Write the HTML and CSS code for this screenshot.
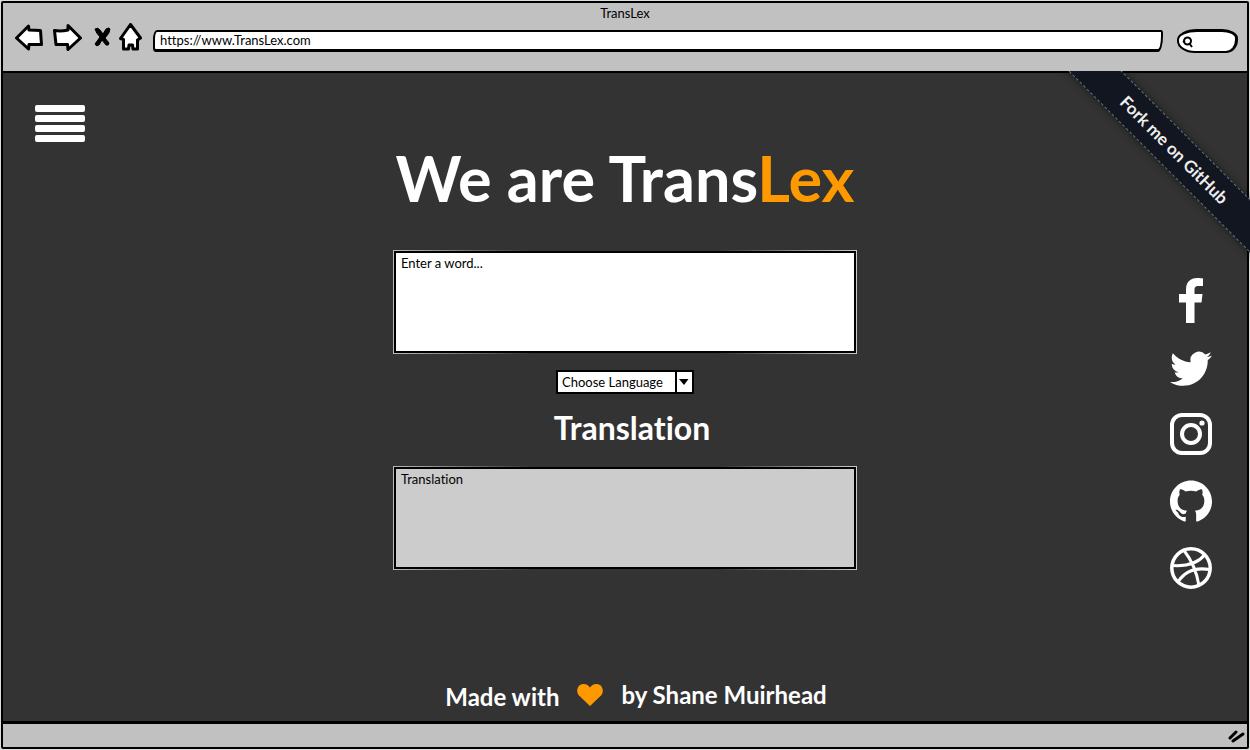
FILE: index.html
```html
<!DOCTYPE html>
<html lang="en">
<head>
<meta charset="utf-8">
<title>TransLex</title>
<link rel="stylesheet" href="styles.css">
</head>
<body>
<div class="window">
  <header class="chrome">
    <div class="chrome-title">TransLex</div>
    <div class="toolbar">
      <button class="tool" type="button" aria-label="Back">
        <svg width="28" height="27" viewBox="0 0 28 27"><path class="sketch" d="M1.500 14 L13.500 2 L14 6 L25.500 6.500 Q26 14 26.500 20.500 L14 20.500 L13.500 25 Z"/></svg>
      </button>
      <button class="tool tool-forward" type="button" aria-label="Forward">
        <svg width="29" height="27" viewBox="0 0 29 27"><path class="sketch" d="M1.500 6.500 Q8 7.500 15 6 L15 1.500 L27.500 14 L15 25.500 L14.500 20.500 L3 20.500 Z"/></svg>
      </button>
      <button class="tool tool-stop" type="button" aria-label="Stop">
        <svg width="17" height="21" viewBox="0 0 17 21"><path stroke="#000" d="M1 2 Q4 0 6 3 L9 7 L12 2 Q15 0 16 2 Q16 6 11 11 L15 16 Q15 19 12 18 L8 13 L5 18 Q2 20 1 17 L6 10 Q2 6 1 2 Z"/></svg>
      </button>
      <button class="tool" type="button" aria-label="Home">
        <svg width="23" height="28" viewBox="0 0 23 28"><path class="sketch" d="M11.500 1.500 L21.500 15 L18.500 17 L18.500 26 L14 26 L13.500 22 L10 22 L9.500 26 L4.500 26 L4.500 16.500 L1.500 15.500 Z"/></svg>
      </button>
      <input class="address" type="text" aria-label="Address" value="https://www.TransLex.com">
      <label class="search">
        <svg width="12" height="12" viewBox="0 0 12 12" fill="none" stroke="#000" stroke-width="2"><circle cx="5.500" cy="5" r="3.500"/><path d="M3 6.500 L1 5 M7 7 L10 11"/></svg>
        <input class="search-input" type="text" aria-label="Search">
      </label>
    </div>
  </header>

  <main class="page">
    <button class="menu" type="button" aria-label="Menu">
      <span class="bar"></span><span class="bar"></span><span class="bar"></span><span class="bar"></span>
    </button>

    <section class="translator">
      <h1 class="brand">We are Trans<span class="accent">Lex</span></h1>
      <div class="field"><textarea class="box" aria-label="Word" placeholder="Enter a word..."></textarea></div>
      <div class="picker">
        <select class="language" aria-label="Language"><option>Choose Language</option></select>
        <svg class="picker-arrow" width="10" height="6" viewBox="0 0 10 6"><path d="M0 0 H9.500 L5 6 Z"/></svg>
      </div>
      <h2 class="subtitle"><label for="result">Translation</label></h2>
      <div class="field"><textarea class="box box-result" id="result" placeholder="Translation" readonly></textarea></div>
    </section>

    <nav class="social" aria-label="Social">
      <a class="social-link" href="#" aria-label="Facebook">
        <svg width="24" height="45" viewBox="0 0 24 45"><path d="M24 .5 V8 H19.500 C16 8 15.500 9.500 15.500 12.500 V16 H23.500 L22.500 24.500 H15.500 V45 H7 V24.500 H0 V16 H7 V11.500 C7 4 11.500 0 18 0 C21 0 23 .2 24 .5 Z"/></svg>
      </a>
      <a class="social-link" href="#" aria-label="Twitter">
        <svg width="42" height="42" viewBox="0 1 24 24"><path transform="translate(0 2)" d="M23.953 4.570a10 10 0 01-2.825.775 4.958 4.958 0 002.163-2.723c-.951.555-2.005.959-3.127 1.184a4.920 4.920 0 00-8.384 4.482C7.690 8.095 4.067 6.130 1.640 3.162a4.822 4.822 0 00-.666 2.475c0 1.710.87 3.213 2.188 4.096a4.904 4.904 0 01-2.228-.616v.06a4.923 4.923 0 003.946 4.827 4.996 4.996 0 01-2.212.085 4.936 4.936 0 004.604 3.417 9.867 9.867 0 01-6.102 2.105c-.39 0-.779-.023-1.170-.067a13.995 13.995 0 007.557 2.209c9.053 0 13.998-7.496 13.998-13.985 0-.21 0-.42-.015-.63A9.935 9.935 0 0024 4.590z"/></svg>
      </a>
      <a class="social-link" href="#" aria-label="Instagram">
        <svg width="42" height="42" viewBox="0 0 42 42"><rect x="2" y="2" width="38" height="38" rx="10" fill="none" stroke="#fff" stroke-width="4"/><circle cx="21" cy="21" r="9" fill="none" stroke="#fff" stroke-width="4"/><circle cx="32" cy="10" r="2.600"/></svg>
      </a>
      <a class="social-link" href="#" aria-label="GitHub">
        <svg width="42" height="42" viewBox="0 0 24 24"><path d="M12 .297c-6.630 0-12 5.373-12 12 0 5.303 3.438 9.800 8.205 11.385.6.113.82-.258.82-.577 0-.285-.01-1.040-.015-2.040-3.338.724-4.042-1.610-4.042-1.610C4.422 18.070 3.633 17.700 3.633 17.700c-1.087-.744.084-.729.084-.729 1.205.084 1.838 1.236 1.838 1.236 1.070 1.835 2.809 1.305 3.495.998.108-.776.417-1.305.76-1.605-2.665-.3-5.466-1.332-5.466-5.930 0-1.310.465-2.380 1.235-3.220-.135-.303-.54-1.523.105-3.176 0 0 1.005-.322 3.300 1.230.96-.267 1.980-.399 3-.405 1.020.006 2.040.138 3 .405 2.280-1.552 3.285-1.230 3.285-1.230.645 1.653.24 2.873.12 3.176.765.84 1.230 1.910 1.230 3.220 0 4.610-2.805 5.625-5.475 5.920.42.36.81 1.096.81 2.220 0 1.606-.015 2.896-.015 3.286 0 .315.21.69.825.57C20.565 22.092 24 17.592 24 12.297c0-6.627-5.373-12-12-12"/></svg>
      </a>
      <a class="social-link" href="#" aria-label="Dribbble">
        <svg width="42" height="42" viewBox="0 0 42 42" fill="none" stroke="#fff" stroke-width="3"><circle cx="21" cy="21" r="19.200" stroke-width="3.500"/><path d="M14 3.500 Q25.500 18 29 38.500 M2.500 18.500 Q25 20 35 7.500 M8 35 Q18 19 39.500 22.500"/></svg>
      </a>
    </nav>

    <p class="credit">
      <span class="credit-lead">Made with</span>
      <svg width="26" height="22" viewBox="0 0 26 22" role="img" aria-label="love"><path fill="#ff9900" d="M13 22 L2 11.500 C-1 8 0 3 3 1 C6.500 -.8 10.500 0 13 3.500 C15.500 0 19.500 -.8 23 1 C26 3 27 8 24 11.500 Z"/></svg>
      <span>by Shane Muirhead</span>
    </p>
  </main>

  <footer class="status">
    <svg width="17" height="14" viewBox="0 0 17 14" stroke="#000" stroke-width="3" stroke-linecap="round"><path d="M2 9 L8 3 M5 12 L15 5"/></svg>
  </footer>

  <div class="ribbon-clip"><a class="ribbon" href="#">Fork me on GitHub</a></div>
</div>
</body>
</html>
```

FILE: styles.css
```css
* { box-sizing: border-box; }

body {
  margin: 0;
  background: #dcdedc;
  color: #000;
  font-family: Lato, "Liberation Sans", sans-serif;
  font-size: 13px;
  font-variant-ligatures: none;
}

button { padding: 0; border: 0; background: none; }

.window {
  position: relative;
  display: flex;
  flex-direction: column;
  min-height: calc(100vh - 2px);
  margin: 1px;
  border: 2px solid #000;
  border-radius: 2px;
  background: #333;
}

.chrome {
  height: 70px;
  border-bottom: 2px solid #000;
  background: #c1c1c1;
}

.chrome-title {
  padding-top: 2px;
  line-height: 16px;
  text-align: center;
}

.toolbar {
  display: flex;
  align-items: center;
  padding: 0 9px 0 12px;
}

.tool { display: flex; margin-right: 10px; }
.tool-forward { margin-right: 12px; }
.tool-stop { margin-right: 8px; }

.sketch {
  fill: #fff;
  stroke: #000;
  stroke-width: 3;
  stroke-linejoin: round;
}

.address {
  flex: 1;
  min-width: 0;
  height: 22px;
  margin: 8px 14px 0 1px;
  padding: 0 5px 2px;
  border: 2px solid #000;
  border-width: 2px 2px 3px;
  border-radius: 4px 2px 5px 3px / 9px 3px 16px 4px;
  background: #fff;
  font: inherit;
}

.search {
  display: flex;
  align-items: center;
  width: 61px;
  height: 24px;
  margin-top: 8px;
  padding-left: 3px;
  border: 3px solid #000;
  border-width: 3px 3px 2px 2px;
  border-radius: 20px 16px 12px 18px / 11px 9px 13px 12px;
  background: #fff;
}

.search-input {
  width: 36px;
  border: 0;
  outline: 0;
  background: none;
}

.page {
  flex: 1;
  display: grid;
  grid-template-columns: 1fr 464px 1fr;
  grid-template-rows: 1fr auto;
}

.menu {
  display: flex;
  flex-direction: column;
  gap: 3px;
  align-self: start;
  justify-self: start;
  margin: 32px 0 0 32px;
}

.bar {
  width: 50px;
  height: 7px;
  border-radius: 2px;
  background: #fff;
}

.translator {
  display: flex;
  flex-direction: column;
  align-items: center;
  padding-top: 69px;
}

.brand {
  margin: 0 0 36px;
  color: #fff;
  font-size: 63px;
  font-weight: 700;
  line-height: 72px;
  white-space: nowrap;
}

.accent { color: #ff9900; }

.field {
  display: flex;
  width: 100%;
  padding: 1px;
  background: linear-gradient(90deg, #bbb, #333 30%, #333 70%, #ccc);
}

.box {
  flex: 1;
  height: 102px;
  padding: 2px 5px;
  border: 2px solid #000;
  background: #fff;
  font: inherit;
  line-height: 16px;
  resize: none;
}

.box-result { background: #ccc; }
.box::placeholder { color: #000; opacity: 1; }

.picker {
  position: relative;
  margin-top: 16px;
}

.language {
  appearance: none;
  width: 138px;
  height: 24px;
  padding: 0 20px 0 4px;
  border: 2px solid #000;
  border-radius: 1px;
  background: linear-gradient(90deg, #fff 117px, #000 117px, #000 119px, #fff 119px);
  color: #000;
  font: inherit;
}

.picker-arrow {
  position: absolute;
  top: 9px;
  right: 5px;
  pointer-events: none;
}

.subtitle {
  margin: 12px 0 16px;
  padding-left: 14px;
  color: #fff;
  font-size: 32px;
  font-weight: 700;
  line-height: 44px;
}

.social {
  display: flex;
  flex-direction: column;
  gap: 25px;
  justify-self: end;
  margin: 206px 35px 0 0;
}

.social-link {
  display: flex;
  align-items: center;
  justify-content: center;
  width: 42px;
  height: 42px;
  fill: #fff;
}

.credit {
  grid-column: 1 / -1;
  display: flex;
  align-items: center;
  justify-content: center;
  gap: 18px;
  margin: 0;
  padding: 0 0 8px 22px;
  color: #fff;
  font-size: 24px;
  font-weight: 700;
  line-height: 32px;
}

.credit-lead { padding-top: 4px; }

.status {
  display: flex;
  align-items: center;
  justify-content: flex-end;
  height: 26px;
  padding-right: 2px;
  border-top: 3px solid #000;
  background: #c1c1c1;
}

.ribbon-clip {
  position: absolute;
  top: 68px;
  right: -3px;
  width: 190px;
  height: 190px;
  overflow: hidden;
  pointer-events: none;
}

.ribbon {
  position: absolute;
  top: 60px;
  left: -26px;
  width: 280px;
  height: 38px;
  border: 1px dashed #6b6f7b;
  background: #121621;
  box-shadow: 0 0 8px rgba(0, 0, 0, 0.5);
  color: #eee;
  font-size: 17px;
  font-weight: 700;
  line-height: 36px;
  text-align: center;
  text-decoration: none;
  transform: rotate(45deg);
  pointer-events: auto;
}
```
